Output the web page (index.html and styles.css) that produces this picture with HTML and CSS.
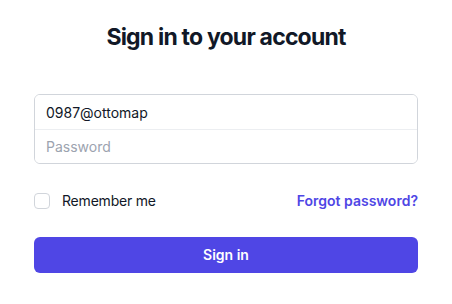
FILE: index.html
```html
<!DOCTYPE html>
<html lang="en">
<head>
    <meta charset="UTF-8">
    <meta name="viewport" content="width=device-width, initial-scale=1.0">
    <title>Sign in</title>
    <link rel="stylesheet" href="styles.css">
</head>
<body>

    <div class="login-box">
        <h1>Sign in to your account</h1>

        <form class="login-form">
            <div class="field-group">
                <input class="field" type="text" name="email" value="0987@ottomap">
                <input class="field field-last" type="password" name="password" placeholder="Password">
            </div>

            <div class="options">
                <label class="remember">
                    <input class="check" type="checkbox" name="remember">
                    <span>Remember me</span>
                </label>
                <a class="forgot" href="#">Forgot password?</a>
            </div>

            <button class="submit" type="submit">Sign in</button>
        </form>
    </div>

</body>
</html>
```

FILE: styles.css
```css
body {
    margin: 0;
    font-family: Inter, "Noto Sans", sans-serif;
    background: #ffffff;
    color: #111827;
}
.login-box {
    width: 384px;
    margin: 0 auto;
    padding-top: 21px;
}
h1 {
    margin: 0;
    font-size: 23px;
    line-height: 32px;
    font-weight: 700;
    text-align: center;
    letter-spacing: -0.8px;
    color: #111827;
}
.login-form {
    margin-top: 41px;
}
.field-group {
    border: 1px solid #d1d5db;
    border-radius: 6px;
    overflow: hidden;
}
.field {
    display: block;
    width: 100%;
    box-sizing: border-box;
    height: 34px;
    margin: 0;
    padding: 0 11px;
    border: none;
    outline: none;
    font-family: inherit;
    font-size: 14px;
    color: #111827;
    background: #ffffff;
}
.field-last {
    border-top: 1px solid #eceef1;
}
.field::placeholder {
    color: #9ca3af;
}
.options {
    display: flex;
    align-items: center;
    justify-content: space-between;
    height: 20px;
    margin-top: 27px;
    font-size: 14px;
    line-height: 20px;
}
.remember {
    display: flex;
    align-items: center;
    gap: 12px;
    color: #111827;
    letter-spacing: -0.2px;
}
.check {
    appearance: none;
    width: 16px;
    height: 16px;
    margin: 0;
    border: 1px solid #d1d5db;
    border-radius: 4px;
    background: #ffffff;
}
.forgot {
    color: #4f46e5;
    font-weight: 600;
    text-decoration: none;
}
.submit {
    display: block;
    width: 100%;
    height: 36px;
    margin-top: 26px;
    border: none;
    border-radius: 6px;
    background: #4f46e5;
    color: #ffffff;
    font-family: inherit;
    font-size: 14px;
    font-weight: 600;
    line-height: 20px;
}
```
